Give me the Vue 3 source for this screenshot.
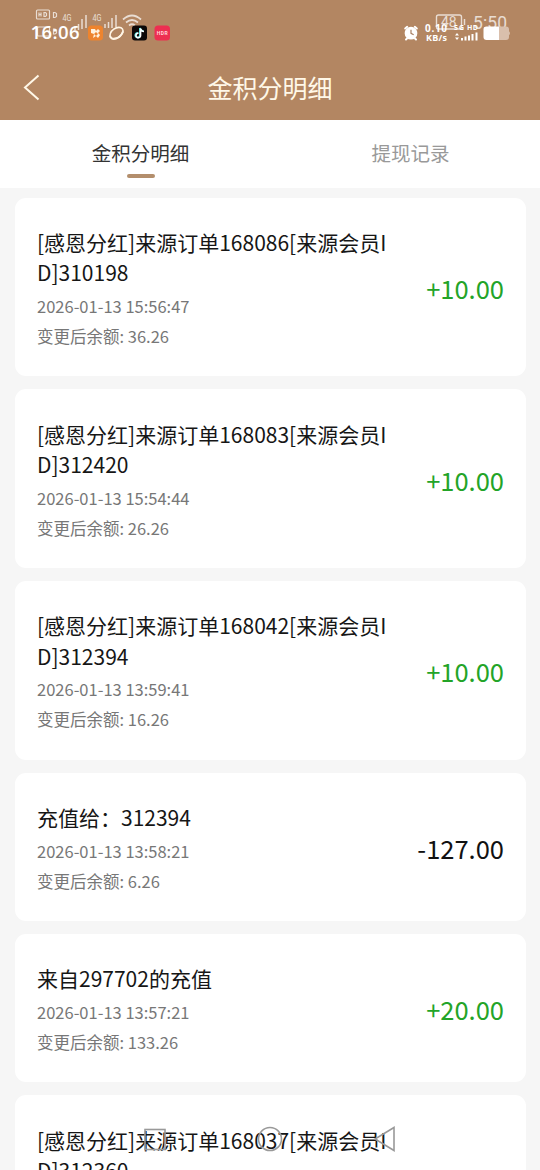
<script setup>
const records = [
  { title: '[感恩分红]来源订单168086[来源会员ID]310198', time: '2026-01-13 15:56:47', balance: '36.26', amount: '+10.00' },
  { title: '[感恩分红]来源订单168083[来源会员ID]312420', time: '2026-01-13 15:54:44', balance: '26.26', amount: '+10.00' },
  { title: '[感恩分红]来源订单168042[来源会员ID]312394', time: '2026-01-13 13:59:41', balance: '16.26', amount: '+10.00' },
  { title: '充值给：312394', time: '2026-01-13 13:58:21', balance: '6.26', amount: '-127.00' },
  { title: '来自297702的充值', time: '2026-01-13 13:57:21', balance: '133.26', amount: '+20.00' },
  { title: '[感恩分红]来源订单168037[来源会员ID]312360', time: '', balance: '', amount: '' },
]
</script>

<template>
  <div class="screen">
    <header class="header">
      <svg class="status" width="540" height="50" viewBox="0 0 540 50">
        <!-- secondary status layer, semi-transparent -->
        <g class="faint" fill="none" stroke="#fff" stroke-width="1.2">
          <rect x="36.500" y="10" width="13" height="9" rx="1" />
          <path d="M39 12.500v4M41 12.500v4M39 14.500h2M44 12.500v4h1.500l1-1v-2l-1-1z" />
          <path d="M53.500 12.500v5h1.500l1.500-1v-3l-1.500-1z" />
          <rect x="37.500" y="27" width="12" height="9" rx="1" />
          <path d="M53.500 29v5h1.500l1.500-1v-3l-1.500-1z" />
          <path d="M78.500 30v-6M82 29v-10M86 28v-13M75 30v-4" stroke-width="1.500" />
          <path d="M105 28v-4M108.500 28v-6M112 28v-10M116 27v-12" stroke-width="1.500" />
          <path d="M123 19.500q9-8 18 0M126 22.500q6-5 12 0M129 25.500q3-2.500 6 0" stroke-width="1.700" />
          <rect x="436.500" y="15" width="25" height="14" rx="2" stroke-width="1.400" />
          <path d="M464.500 19v6" stroke-width="1.500" />
        </g>
        <g class="faint" fill="#fff">
          <text x="62.500" y="21" font-size="9" textLength="9" lengthAdjust="spacingAndGlyphs">4G</text>
          <text x="92.500" y="21" font-size="9" textLength="9" lengthAdjust="spacingAndGlyphs">4G</text>
          <text x="441" y="27" font-size="14">48</text>
          <text x="473" y="29" font-size="17.500" textLength="34">5:50</text>
        </g>

        <text class="clock" x="30.500" y="39" font-size="18.500" textLength="49">16:06</text>
        <g>
          <rect x="88" y="25.500" width="15" height="15" rx="3.500" fill="#ee842e" />
          <path d="M91 29h4l1 2 2-2 2 2-2 2 2 2-2 3-2-2-3 2 1-4-3-1z" fill="#fff2df" />
          <path d="M94 34l2-2 2 2-2 2z" fill="#ee842e" />
        </g>
        <g fill="none" stroke="#fff5e5">
          <ellipse cx="116.500" cy="33" rx="7.200" ry="4.700" transform="rotate(-35 116.500 33)" stroke-width="1.600" />
          <path d="M110 36q1 4 6 2.500q5-1.500 7-7" stroke-width="2" />
        </g>
        <rect x="132" y="25.500" width="15" height="15" rx="3" fill="#0c0808" />
        <path d="M139.900 28v7.200a2.300 2.300 0 1 1-2-2.300M139.900 28q.5 3 3.600 3.200" fill="none" stroke="#5be4e0" stroke-width="1.800" />
        <path d="M140.600 28.500v7a2.300 2.300 0 1 1-2-2.300M140.600 28.500q.5 3 3.400 3" fill="none" stroke="#fff" stroke-width="1.500" />
        <rect x="154.500" y="25.500" width="15.500" height="15" rx="3.500" fill="#ed2f51" />
        <text x="156.700" y="34.700" font-size="5" font-weight="700" textLength="11" fill="#ffd5dc">HDR</text>

        <g stroke="#fff" fill="none">
          <circle cx="411" cy="33.200" r="5.600" fill="#fff" stroke-width="1.500" />
          <path d="M405.200 28.500l2-1.700M416.800 28.500l-2-1.700M407 38.500l-1 1M415 38.500l1 1" stroke-width="2" stroke-linecap="round" />
          <path d="M411 29.800v3.600l2.700 1.400" stroke="#a98163" stroke-width="1.200" />
        </g>
        <g class="tiny" fill="#fff">
          <text x="425" y="31.500" font-size="10" textLength="22">0.10</text>
          <text x="426" y="41" font-size="9" textLength="21">KB/s</text>
          <text x="454" y="30" font-size="7" textLength="10">5G</text>
          <text x="467" y="30" font-size="7" textLength="11">HD</text>
        </g>
        <path d="M455 35.500l2-2.500 2 2.500zM455 37.500h4l-2 2.500z" fill="#fff" />
        <path d="M462 40.500v-2.500M465.500 40.500v-4M469 40.500v-5M472.500 40.500v-6.500M476.500 40.500v-8" stroke="#fff" stroke-width="2" />
        <path d="M499 26.500h7a3 3 0 0 1 3 3v1.700q2 2 0 4v1.800a3 3 0 0 1-3 3h-7z" fill="#d9bfac" />
        <path d="M486.500 26.500h12.500v13.500h-12.500a3 3 0 0 1-3-3v-7.500a3 3 0 0 1 3-3z" fill="#fff" />
      </svg>
      <div class="navbar">
        <svg class="back" width="20" height="28" viewBox="0 0 20 28">
          <path d="M16.500 2.500L3 14.500l13.500 12" fill="none" stroke="#fff8e8" stroke-width="2" />
        </svg>
        <h1>金积分明细</h1>
      </div>
    </header>

    <nav class="tabs">
      <div class="tab active">金积分明细</div>
      <div class="tab">提现记录</div>
    </nav>

    <main class="list">
      <article v-for="r in records" :key="r.title" class="card">
        <div class="info">
          <div class="title">{{ r.title }}</div>
          <template v-if="r.time">
            <div class="meta">{{ r.time }}</div>
            <div class="meta">变更后余额: {{ r.balance }}</div>
          </template>
        </div>
        <div class="amount" :class="{ plus: r.amount.startsWith('+') }">{{ r.amount }}</div>
      </article>
    </main>

    <svg class="sysnav" width="260" height="30" viewBox="0 0 260 30" fill="none" stroke="#999" stroke-width="1.600">
      <rect x="5" y="4.500" width="20" height="20" />
      <circle cx="130" cy="14" r="11.500" />
      <path d="M254 2.500v23L235 14z" />
    </svg>
  </div>
</template>

<style>
body { margin: 0; background: #f6f6f6; }
</style>

<style scoped>
.screen {
  position: relative;
  width: 540px;
  height: 1170px;
  overflow: hidden;
  background: #f6f6f6;
  font-family: "Noto Sans CJK SC", sans-serif;
  color: #161616;
}
.header { height: 120px; background: #b38662; }
.status { display: block; font-family: Roboto, sans-serif; }
.faint { opacity: 0.72; }
.clock { fill: #fff; font-family: "Open Sans", sans-serif; font-weight: 600; }
.tiny { font-family: "Open Sans", sans-serif; font-weight: 700; }
.navbar {
  display: grid;
  grid-template-columns: 60px 1fr 60px;
  align-items: center;
  height: 70px;
  padding-top: 3px;
  box-sizing: border-box;
}
.back { margin-left: 22px; }
h1 {
  margin: 0;
  text-align: center;
  color: #fff8e8;
  font-size: 25px;
  font-weight: 400;
  line-height: 34px;
}
.tabs { display: flex; height: 68px; background: #fff; }
.tab {
  flex: 1;
  display: flex;
  flex-direction: column;
  align-items: center;
  padding-top: 18px;
  padding-left: 11px;
  font-size: 19.500px;
  line-height: 29px;
  color: #999;
}
.tab.active { color: #333; }
.tab.active::after {
  content: "";
  width: 28px;
  height: 4px;
  margin-top: 7px;
  border-radius: 2px;
  background: #b38e6c;
}
.list { display: flex; flex-direction: column; gap: 13px; padding: 9.700px 14px 0 15px; }
.card {
  display: flex;
  align-items: center;
  justify-content: space-between;
  padding: 29.200px 22px 25.300px;
  background: #fff;
  border-radius: 11px;
}
.info { width: 355px; }
.title {
  font-size: 21px;
  line-height: 30.350px;
  margin-bottom: 3.500px;
  word-break: break-all;
}
.meta { font-size: 16.500px; line-height: 30px; color: #777; }
.amount { font-size: 25.500px; line-height: 36px; margin-bottom: 2px; color: #111; }
.amount.plus { color: #23a428; }
.sysnav { position: absolute; left: 140px; top: 1125px; }
</style>
